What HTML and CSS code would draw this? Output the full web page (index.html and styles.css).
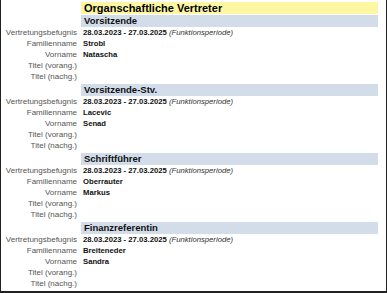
FILE: index.html
```html
<!DOCTYPE html>
<html lang="de">
<head>
<meta charset="utf-8">
<link rel="stylesheet" href="styles.css">
</head>
<body>
<div class="frame">
  <div class="title">Organschaftliche Vertreter</div>

  <section class="sect">
    <div class="head">Vorsitzende</div>
    <div class="row"><span class="lbl">Vertretungsbefugnis</span><span class="val">28.03.2023 - 27.03.2025 <i>(Funktionsperiode)</i></span></div>
    <div class="row"><span class="lbl">Familienname</span><span class="val">Strobl</span></div>
    <div class="row"><span class="lbl">Vorname</span><span class="val">Natascha</span></div>
    <div class="row"><span class="lbl">Titel (vorang.)</span><span class="val"></span></div>
    <div class="row"><span class="lbl">Titel (nachg.)</span><span class="val"></span></div>
  </section>

  <section class="sect">
    <div class="head">Vorsitzende-Stv.</div>
    <div class="row"><span class="lbl">Vertretungsbefugnis</span><span class="val">28.03.2023 - 27.03.2025 <i>(Funktionsperiode)</i></span></div>
    <div class="row"><span class="lbl">Familienname</span><span class="val">Lacevic</span></div>
    <div class="row"><span class="lbl">Vorname</span><span class="val">Senad</span></div>
    <div class="row"><span class="lbl">Titel (vorang.)</span><span class="val"></span></div>
    <div class="row"><span class="lbl">Titel (nachg.)</span><span class="val"></span></div>
  </section>

  <section class="sect">
    <div class="head">Schriftführer</div>
    <div class="row"><span class="lbl">Vertretungsbefugnis</span><span class="val">28.03.2023 - 27.03.2025 <i>(Funktionsperiode)</i></span></div>
    <div class="row"><span class="lbl">Familienname</span><span class="val">Oberrauter</span></div>
    <div class="row"><span class="lbl">Vorname</span><span class="val">Markus</span></div>
    <div class="row"><span class="lbl">Titel (vorang.)</span><span class="val"></span></div>
    <div class="row"><span class="lbl">Titel (nachg.)</span><span class="val"></span></div>
  </section>

  <section class="sect">
    <div class="head">Finanzreferentin</div>
    <div class="row"><span class="lbl">Vertretungsbefugnis</span><span class="val">28.03.2023 - 27.03.2025 <i>(Funktionsperiode)</i></span></div>
    <div class="row"><span class="lbl">Familienname</span><span class="val">Breiteneder</span></div>
    <div class="row"><span class="lbl">Vorname</span><span class="val">Sandra</span></div>
    <div class="row"><span class="lbl">Titel (vorang.)</span><span class="val"></span></div>
    <div class="row"><span class="lbl">Titel (nachg.)</span><span class="val"></span></div>
  </section>
</div>
</body>
</html>
```

FILE: styles.css
```css
* { box-sizing: border-box; }
html, body { margin: 0; padding: 0; background: #fff; }
body {
  font-family: "Liberation Sans", Arial, sans-serif;
  color: #111;
}
.frame {
  width: 387px;
  height: 293px;
  padding-top: 2px;
  border-left: 1px solid #222;
  border-right: 1px solid #222;
  border-bottom: 2px solid #222;
  overflow: hidden;
}
.title {
  margin-left: 80px;
  width: 297px;
  height: 12px;
  line-height: 12px;
  padding-left: 3px;
  background: #fdf7a2;
  font-size: 11px;
  font-weight: bold;
  color: #000;
}
.sect {
  display: flex;
  flex-direction: column;
  margin-top: 1px;
}
.sect + .sect { margin-top: 2px; }
.head {
  margin-left: 80px;
  width: 297px;
  height: 12px;
  line-height: 12px;
  padding-left: 3px;
  background: #d3dce9;
  font-size: 9.5px;
  font-weight: bold;
  color: #111;
}
.row {
  display: grid;
  grid-template-columns: 76px 1fr;
  column-gap: 6px;
  height: 11px;
  line-height: 11px;
  font-size: 8px;
}
.lbl {
  text-align: right;
  color: #555;
  white-space: nowrap;
}
.val {
  font-size: 7.7px;
  font-weight: bold;
  color: #111;
  white-space: nowrap;
}
.val i {
  font-weight: normal;
  color: #333;
}
```
